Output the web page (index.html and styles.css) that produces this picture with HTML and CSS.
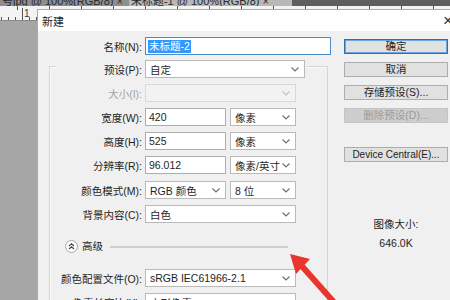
FILE: index.html
```html
<!DOCTYPE html>
<html lang="zh-CN">
<head>
    <meta charset="UTF-8">
    <title>新建</title>
    <link rel="stylesheet" href="styles.css">
</head>
<body>
    <div class="app">
        <div class="tabs">
            <span class="tab">号jpg @ 100%(RGB/8) <i class="tab-x">×</i></span>
            <span class="tab active">未标题-1 @ 100%(RGB/8) <i class="tab-x">×</i></span>
        </div>
        <div class="ruler"><span class="ruler-num">1</span></div>
        <div class="canvas"></div>
    </div>

    <div class="dialog">
        <div class="titlebar">
            <span class="title">新建</span>
            <span class="close">×</span>
        </div>
        <div class="dialog-body">
            <div class="form">
                <div class="row name-row">
                    <label>名称(N):</label>
                    <div class="input focus"><span class="selected">未标题-2</span></div>
                </div>

                <div class="group">
                    <div class="row legend">
                        <label>预设(P):</label>
                        <div class="select w-preset"><span>自定</span><svg class="chev" width="8" height="5" viewBox="0 0 8 5"><path d="M0.5 0.5 L4 4 L7.5 0.5" /></svg></div>
                    </div>
                    <div class="row">
                        <label class="disabled">大小(I):</label>
                        <div class="select w-full off"><span></span><svg class="chev" width="8" height="5" viewBox="0 0 8 5"><path d="M0.5 0.5 L4 4 L7.5 0.5" /></svg></div>
                    </div>
                    <div class="row">
                        <label>宽度(W):</label>
                        <div class="input w-num">420</div>
                        <div class="select w-unit"><span>像素</span><svg class="chev" width="8" height="5" viewBox="0 0 8 5"><path d="M0.5 0.5 L4 4 L7.5 0.5" /></svg></div>
                    </div>
                    <div class="row">
                        <label>高度(H):</label>
                        <div class="input w-num">525</div>
                        <div class="select w-unit"><span>像素</span><svg class="chev" width="8" height="5" viewBox="0 0 8 5"><path d="M0.5 0.5 L4 4 L7.5 0.5" /></svg></div>
                    </div>
                    <div class="row">
                        <label>分辨率(R):</label>
                        <div class="input w-num">96.012</div>
                        <div class="select w-unit"><span>像素/英寸</span><svg class="chev" width="8" height="5" viewBox="0 0 8 5"><path d="M0.5 0.5 L4 4 L7.5 0.5" /></svg></div>
                    </div>
                    <div class="row mode-row">
                        <label>颜色模式(M):</label>
                        <div class="select w-num"><span>RGB 颜色</span><svg class="chev" width="8" height="5" viewBox="0 0 8 5"><path d="M0.5 0.5 L4 4 L7.5 0.5" /></svg></div>
                        <div class="select w-unit"><span>8 位</span><svg class="chev" width="8" height="5" viewBox="0 0 8 5"><path d="M0.5 0.5 L4 4 L7.5 0.5" /></svg></div>
                    </div>
                    <div class="row">
                        <label>背景内容(C):</label>
                        <div class="select w-full"><span>白色</span><svg class="chev" width="8" height="5" viewBox="0 0 8 5"><path d="M0.5 0.5 L4 4 L7.5 0.5" /></svg></div>
                    </div>

                    <div class="advanced">
                        <svg class="toggle" width="13" height="13" viewBox="0 0 13 13">
                            <circle cx="6.5" cy="6.5" r="6" fill="#fff" stroke="#a8a8a8" />
                            <path d="M4 6 L6.5 3.8 L9 6 M4 9 L6.5 6.8 L9 9" fill="none" stroke="#444" stroke-width="1.1" />
                        </svg>
                        <span class="adv-text">高级</span>
                        <span class="adv-line"></span>
                    </div>

                    <div class="row">
                        <label>颜色配置文件(O):</label>
                        <div class="select w-full"><span>sRGB IEC61966-2.1</span><svg class="chev" width="8" height="5" viewBox="0 0 8 5"><path d="M0.5 0.5 L4 4 L7.5 0.5" /></svg></div>
                    </div>
                    <div class="row">
                        <label>像素长宽比(X):</label>
                        <div class="select w-full"><span>方形像素</span><svg class="chev" width="8" height="5" viewBox="0 0 8 5"><path d="M0.5 0.5 L4 4 L7.5 0.5" /></svg></div>
                    </div>
                </div>
            </div>

            <div class="side">
                <div class="btn default">确定</div>
                <div class="btn">取消</div>
                <div class="btn">存储预设(S)...</div>
                <div class="btn disabled">删除预设(D)...</div>
                <div class="btn central">Device Central(E)...</div>
                <div class="size-info">
                    <p>图像大小:</p>
                    <p>646.0K</p>
                </div>
            </div>
        </div>
    </div>

    <svg class="arrow" width="70" height="60" viewBox="0 0 70 60">
        <line x1="20" y1="19" x2="60" y2="64" stroke="#e8352d" stroke-width="6" />
        <polygon points="10,9 30,14 16,29" fill="#e8352d" />
    </svg>
</body>
</html>
```

FILE: styles.css
```css
body {
    margin: 0;
    width: 450px;
    height: 300px;
    overflow: hidden;
    position: relative;
    font-family: "Liberation Sans", "Noto Sans CJK SC", sans-serif;
    font-size: 10.5px;
    color: #1e1e1e;
    background-color: #a6a6a6;
}

.app {
    display: flex;
    flex-direction: column;
    height: 300px;
}

.tabs {
    height: 6px;
    display: flex;
    background-color: #5e5e5e;
    overflow: hidden;
    font-size: 11px;
}

.tab {
    display: block;
    padding: 0 6px 0 2px;
    color: #2a2a2a;
    background-color: #8e8e8e;
    height: 6px;
    line-height: 2px;
    white-space: nowrap;
}

.tab.active {
    background-color: #b8b8b8;
    width: 155px;
}

.tab-x {
    font-style: normal;
}

.ruler {
    height: 14px;
    position: relative;
    background-color: #f3f3f3;
    background-image:
        repeating-linear-gradient(90deg, #555 0 1px, transparent 1px 7px),
        repeating-linear-gradient(90deg, #555 0 1px, transparent 1px 32px);
    background-size: 100% 3px, 100% 4px;
    background-position: 1px 100%, 17px 0;
    background-repeat: no-repeat;
    border-bottom: 1px solid #8a8a8a;
}

.ruler-num {
    position: absolute;
    left: 24px;
    top: 2px;
    font-size: 10px;
    line-height: 11px;
    color: #333;
}

.ruler::before {
    content: "";
    position: absolute;
    left: 22px;
    top: 2px;
    width: 1px;
    height: 12px;
    background-color: #555;
}

.canvas {
    flex: 1;
    background-color: #a6a6a6;
}

/* dialog window */
.dialog {
    position: absolute;
    left: 37px;
    top: 9px;
    width: 430px;
    height: 320px;
    border: 1px solid #8ab4dc;
    background-color: #f0f0f0;
}

.titlebar {
    height: 21px;
    background-color: #fff;
    display: flex;
    align-items: center;
    justify-content: space-between;
    padding-left: 4px;
}

.title {
    font-size: 11px;
}

.close {
    font-size: 17px;
    font-weight: 300;
    color: #333;
    margin-right: 15px;
    line-height: 20px;
}

.dialog-body {
    display: flex;
    padding-top: 6px;
}

.form {
    width: 293px;
}

.row {
    display: flex;
    align-items: center;
    height: 18px;
    margin-top: 6px;
}

.row.mode-row {
    margin-top: 7px;
}

.row label {
    width: 92px;
    text-align: right;
    margin-right: 3px;
    white-space: nowrap;
}

.row label.disabled {
    color: #a3a3a3;
}

.name-row {
    margin-top: 0;
}

.name-row label {
    width: 104px;
}

.input {
    box-sizing: border-box;
    height: 18px;
    background-color: #fff;
    border: 1px solid #abadb3;
    padding-left: 3px;
    line-height: 16px;
}

.input.focus {
    width: 186px;
    border-color: #4a8bc8;
    padding-left: 2px;
}

.selected {
    background-color: #3399ff;
    color: #fff;
    padding: 0 1px;
    display: inline-block;
    line-height: 13px;
    margin-top: 1px;
}

.select {
    box-sizing: border-box;
    height: 18px;
    background-color: #fff;
    border: 1px solid #b9b9b9;
    display: flex;
    align-items: center;
    justify-content: space-between;
    padding: 0 5px 0 4px;
    white-space: nowrap;
}

.select.off {
    background-color: #f2f2f2;
    border-color: #d9d9d9;
}

.chev {
    fill: none;
    stroke: #6d6d6d;
    stroke-width: 1.1;
    flex-shrink: 0;
}

.select.off .chev {
    stroke: #c4c4c4;
}

.w-preset {
    width: 160px;
}

.w-full {
    width: 151px;
}

.w-num {
    width: 81px;
    margin-right: 4px;
}

.w-unit {
    width: 66px;
}

/* group box */
.group {
    margin-top: 11px;
    margin-left: 11px;
    width: 277px;
    height: 260px;
    border: 1px solid #d6d6d6;
    border-bottom: none;
    box-shadow: inset 1px 1px 0 #fbfbfb;
}

.legend {
    margin-top: -7px;
    margin-left: 6px;
    width: 250px;
    background-color: #f0f0f0;
}

.legend label {
    width: 86px;
}

.advanced {
    display: flex;
    align-items: center;
    height: 13px;
    margin-top: 17px;
    margin-left: 15px;
}

.adv-text {
    margin-left: 4px;
    line-height: 13px;
}

.adv-line {
    width: 178px;
    height: 2px;
    margin-left: 7px;
    background-color: #cdcdcd;
}

.advanced + .row {
    margin-top: 16px;
}

/* buttons */
.side {
    margin-left: 13px;
    width: 104px;
    padding-top: 2px;
}

.btn {
    box-sizing: border-box;
    height: 15px;
    margin-bottom: 8px;
    background-color: #e1e1e1;
    border: 1px solid #adadad;
    text-align: center;
    line-height: 13px;
    white-space: nowrap;
}

.btn.default {
    border-color: #2d6fb4;
    box-shadow: inset 0 0 0 1px #6fa6df;
}

.btn.disabled {
    background-color: #cdcdcd;
    border-color: #c4c4c4;
    color: #9b9b9b;
}

.btn.central {
    margin-top: 24px;
    font-size: 10px;
}

.size-info {
    margin-top: 55px;
    text-align: center;
}

.size-info p {
    margin: 0 0 4px;
    line-height: 15px;
}

.arrow {
    position: absolute;
    left: 280px;
    top: 245px;
}
```
